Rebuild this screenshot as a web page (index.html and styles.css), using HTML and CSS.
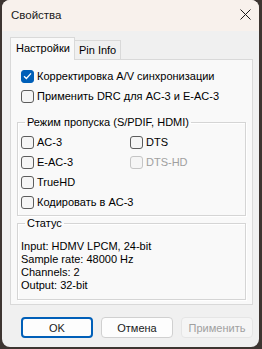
FILE: index.html
```html
<!DOCTYPE html>
<html lang="ru">
<head>
  <meta charset="UTF-8"/>
  <title>Свойства</title>
  <link rel="stylesheet" href="styles.css">
</head>
<body>

<div class="window">
  <div class="titlebar">
    <span class="title">Свойства</span>
    <svg class="close" width="11" height="11" viewBox="0 0 11 11">
      <path d="M0.5 0.5 L10.5 10.5 M10.5 0.5 L0.5 10.5" stroke="#1a1a1a" stroke-width="1" fill="none"/>
    </svg>
  </div>

  <div class="client">
    <div class="tabs">
      <div class="tab active">Настройки</div>
      <div class="tab">Pin Info</div>
    </div>

    <div class="panel">
      <label class="check"><span class="box checked"><svg width="9" height="8" viewBox="0 0 9 8"><path d="M1 4.2 L3.4 6.5 L8 1.4" stroke="#fff" stroke-width="1.3" fill="none"/></svg></span>Корректировка A/V синхронизации</label>
      <label class="check"><span class="box"></span>Применить DRC для AC-3 и E-AC-3</label>

      <fieldset class="group">
        <legend>Режим пропуска (S/PDIF, HDMI)</legend>
        <div class="grid">
          <label class="check"><span class="box"></span>AC-3</label>
          <label class="check"><span class="box"></span>DTS</label>
          <label class="check"><span class="box"></span>E-AC-3</label>
          <label class="check disabled"><span class="box"></span>DTS-HD</label>
          <label class="check"><span class="box"></span>TrueHD</label>
        </div>
        <label class="check"><span class="box"></span>Кодировать в AC-3</label>
      </fieldset>

      <fieldset class="group status">
        <legend>Статус</legend>
        <div>Input: HDMV LPCM, 24-bit</div>
        <div>Sample rate: 48000 Hz</div>
        <div>Channels: 2</div>
        <div>Output: 32-bit</div>
      </fieldset>
    </div>

    <div class="buttons">
      <button class="btn default">OK</button>
      <button class="btn">Отмена</button>
      <button class="btn" disabled>Применить</button>
    </div>
  </div>
</div>

</body>
</html>
```

FILE: styles.css
```css
body {
  margin: 0;
  background: #3d3531;
  font-family: 'Liberation Sans', Arial, sans-serif;
  font-size: 11px;
  color: #000;
  width: 262px;
  height: 349px;
  overflow: hidden;
}
.window {
  margin-left: 2px;
  width: 257px;
  height: 347px;
  background: #f0f0f0;
  border-radius: 8px;
  overflow: hidden;
}
.titlebar {
  height: 31px;
  background: #f8f1ec;
  display: flex;
  align-items: center;
  justify-content: space-between;
  padding: 0 8px 0 9px;
}
.title {
  font-size: 11.5px;
  color: #1a1a1a;
  margin-top: -2px;
}
.close {
  margin: -2px 0 0 0;
}
.client {
  padding: 7px 6px 0 8px;
}
.tabs {
  display: flex;
  align-items: flex-end;
  height: 21px;
}
.tab {
  border: 1px solid #d9d9d9;
  border-bottom: none;
  padding: 1px 4px 0;
  height: 17px;
  line-height: 16px;
  background: #f0f0f0;
}
.tab.active {
  background: #f9f9f9;
  height: 20px;
  padding: 2px 4px 0 5px;
  line-height: 17px;
  position: relative;
  top: 1px;
  margin-right: -1px;
}
.panel {
  border: 1px solid #d9d9d9;
  background: #f9f9f9;
  height: 246px;
  padding: 6px 6px 0 10px;
  box-sizing: border-box;
}
.check {
  display: flex;
  align-items: center;
  height: 20px;
  white-space: nowrap;
}
.box {
  width: 11px;
  height: 11px;
  border: 1px solid #5c5c5c;
  border-radius: 3px;
  background: #f5f5f5;
  margin-right: 3px;
  display: flex;
  align-items: center;
  justify-content: center;
  flex: none;
}
.box.checked {
  background: #005fb8;
  border-color: #005fb8;
}
.check.disabled {
  color: #a0a0a0;
}
.check.disabled .box {
  border-color: #c5c5c5;
}
.group {
  border: 1px solid #d5d5d5;
  box-shadow: inset 1px 1px #fff, 1px 1px #fff;
  margin: 9px 0 0 -4px;
  width: 229px;
  padding: 3px 0 3px 3px;
  box-sizing: border-box;
  min-inline-size: 0;
}
.group legend {
  padding: 0 2px;
  margin-left: 4px;
  line-height: 14px;
}
.grid {
  display: grid;
  grid-template-columns: 109px 1fr;
}
.status {
  margin-top: 0;
  padding: 10px 0 7px 3px;
  line-height: 13px;
}
.buttons {
  display: flex;
  gap: 8px;
  padding: 12px 0 0 11px;
}
.btn {
  width: 73px;
  height: 21px;
  font-family: 'Liberation Sans', Arial, sans-serif;
  font-size: 11px;
  background: #fdfdfd;
  border: 1px solid #d0d0d0;
  border-radius: 4px;
  color: #1a1a1a;
  padding: 0;
}
.btn.default {
  border: 2px solid #005fb8;
}
.btn:disabled {
  background: #f5f5f5;
  border-color: #e5e5e5;
  color: #a0a0a0;
}
```
